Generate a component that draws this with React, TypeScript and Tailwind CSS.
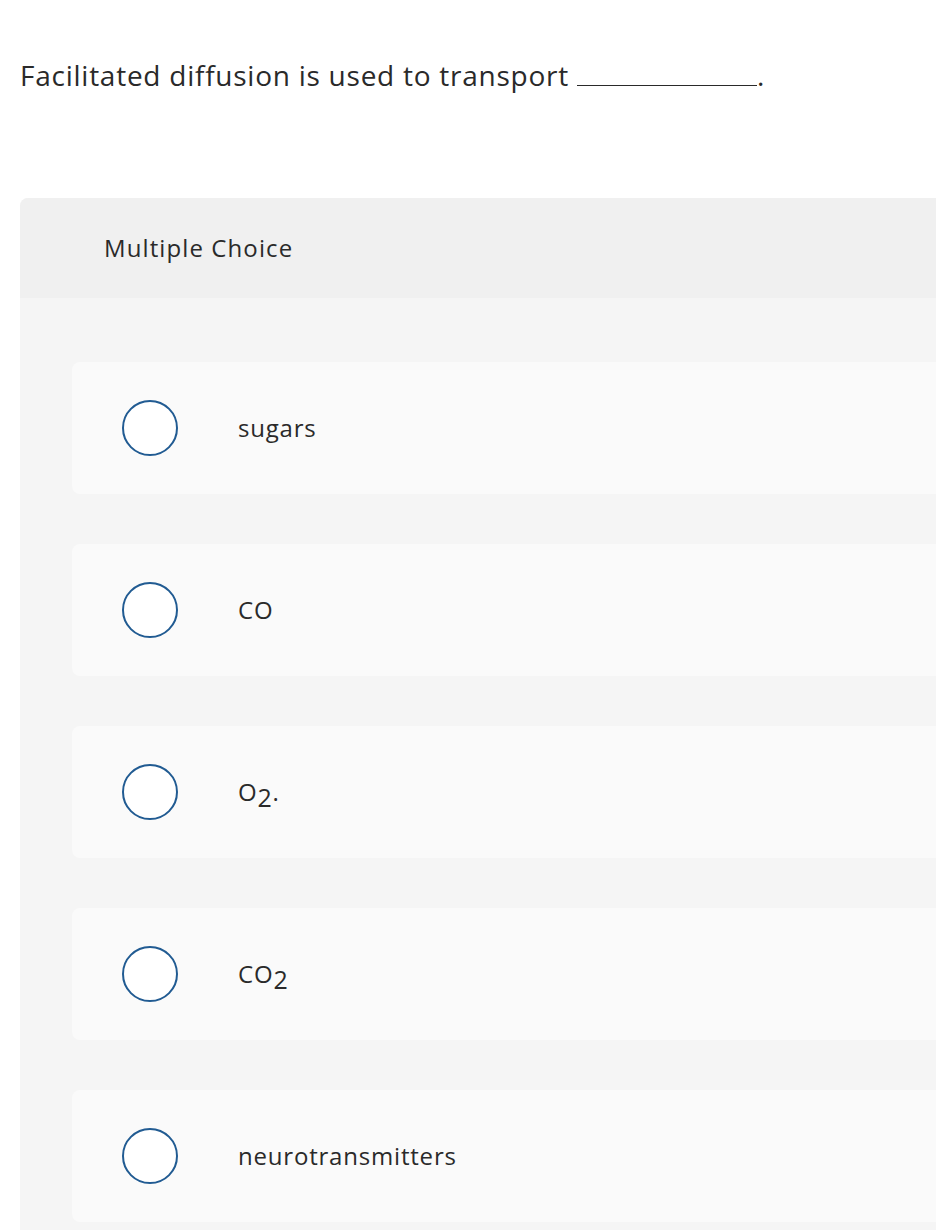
const options: { key: string; label: React.ReactNode }[] = [
  { key: 'a', label: 'sugars' },
  { key: 'b', label: 'CO' },
  {
    key: 'c',
    label: (
      <>
        O<sub className="relative top-[6px] align-baseline text-[25px]">2</sub>.
      </>
    ),
  },
  {
    key: 'd',
    label: (
      <>
        CO<sub className="relative top-[6px] align-baseline text-[25px]">2</sub>
      </>
    ),
  },
  { key: 'e', label: 'neurotransmitters' },
];

export default function App() {
  return (
    <div
      className="min-h-[1230px] w-[936px] overflow-hidden bg-white text-[#2a2a2a]"
      style={{ fontFamily: '"Open Sans", "Liberation Sans", sans-serif' }}
    >
      <p className="pl-[20px] pt-[55px] text-[28px] leading-[40px] tracking-[0.75px]">
        Facilitated diffusion is used to transport{' '}
        <span className="inline-block w-[180px] border-b-[1.5px] border-[#2a2a2a] align-baseline" />.
      </p>

      <div className="ml-[20px] mt-[103px] w-[1000px] overflow-hidden rounded-tl-[8px] bg-[#f5f5f5]">
        <div className="flex h-[100px] items-center bg-[#f0f0f0] pl-[84px] text-[24px] tracking-[1.1px]">
          Multiple Choice
        </div>
        <div className="flex flex-col gap-[50px] pb-[10px] pl-[52px] pt-[64px]">
          {options.map((o) => (
            <label
              key={o.key}
              className="flex h-[132px] cursor-pointer items-center rounded-l-[8px] bg-[#fafafa] pl-[50px]"
            >
              <span className="h-[56px] w-[56px] shrink-0 rounded-full border-2 border-[#215b92] bg-white" />
              <span className="pl-[60px] text-[24px] leading-none tracking-[0.8px]">{o.label}</span>
            </label>
          ))}
        </div>
      </div>
    </div>
  );
}
